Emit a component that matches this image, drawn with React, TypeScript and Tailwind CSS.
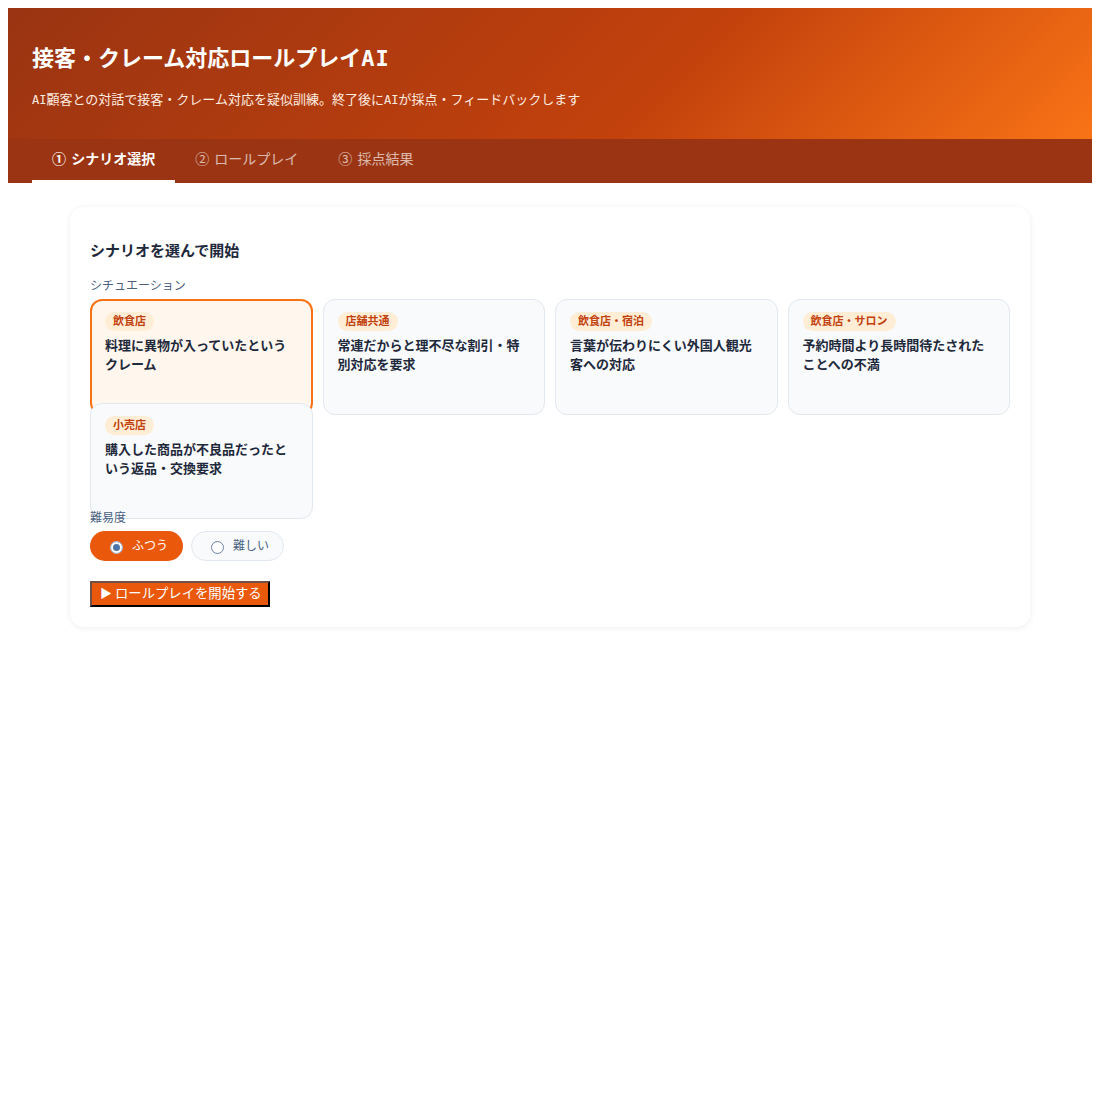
const FONT = "font-['Noto_Sans_CJK_JP','Noto_Sans',sans-serif]";

const SCENARIOS = [
  { tag: "飲食店", text: "料理に異物が入っていたというクレーム", selected: true },
  { tag: "店舗共通", text: "常連だからと理不尽な割引・特別対応を要求" },
  { tag: "飲食店・宿泊", text: "言葉が伝わりにくい外国人観光客への対応" },
  { tag: "飲食店・サロン", text: "予約時間より長時間待たされたことへの不満" },
  { tag: "小売店", text: "購入した商品が不良品だったという返品・交換要求" },
];

const radioClass =
  "mt-[4px] h-[13px] w-[13px] appearance-none rounded-full border border-[#6d83a8] bg-white checked:border-[#b9c9e0] checked:bg-[#4f74a8] checked:shadow-[inset_0_0_0_2px_#fff]";

function ScenarioCard({ tag, text, selected }: { tag: string; text: string; selected?: boolean }) {
  return (
    <div
      className={`h-[116px] rounded-xl border ${
        selected ? "border-2 border-[#f97316] bg-[#fff7ed] px-[13px] pt-[11px]" : "border-[#e2e8f0] bg-[#f8fafc] px-[14px] pt-3"
      }`}
    >
      <span className="block w-fit rounded-full bg-[#ffedd5] px-2 pb-[2px] text-[11px] leading-[17px] font-bold text-[#c2410c]">
        {tag}
      </span>
      <p className="mt-[4px] text-[13px] leading-[19px] font-semibold text-[#1e293b]">{text}</p>
    </div>
  );
}

export default function App() {
  return (
    <div className={`${FONT} m-2 min-h-[1078px] text-[#1e293b]`}>
      <header className="h-[131px] bg-[linear-gradient(135deg,#9a3412_0%,#c2410c_60%,#f97316_100%)] px-6 pt-6">
        <h1 className="text-[22px] leading-[48px] font-bold text-white">
          接客・クレーム対応ロールプレイ<span className="font-['DejaVu_Sans_Mono'] tracking-[1px]">AI</span>
        </h1>
        <p className="mt-[6px] text-[13px] leading-5 text-[#ffede0]">
          <span className="font-['DejaVu_Sans_Mono'] text-[12px]">AI</span>顧客との対話で接客・クレーム対応を疑似訓練。終了後に
          <span className="font-['DejaVu_Sans_Mono'] text-[12px]">AI</span>が採点・フィードバックします
        </p>
      </header>

      <nav className="flex h-11 bg-[#9a3412] px-6 text-sm [word-spacing:2px]">
        <div className="flex items-center border-b-[3px] border-white px-5 pb-[3px] font-bold text-white">① シナリオ選択</div>
        <div className="flex items-center px-5 pb-[6px] text-white/65">② ロールプレイ</div>
        <div className="flex items-center px-5 pb-[6px] text-white/65">③ 採点結果</div>
      </nav>

      <main className="mx-auto mt-6 w-[960px] rounded-[14px] bg-white p-5 shadow-[0_1px_6px_rgba(0,0,0,0.07)]">
        <h2 className="mt-[10px] text-[15px] leading-[26px] font-bold">シナリオを選んで開始</h2>

        <div className="mt-[13px] text-xs leading-[18px] text-[#4a6080]">シチュエーション</div>
        <div className="mt-[5px] grid auto-rows-[94px] grid-cols-4 gap-[10px]">
          {SCENARIOS.map((s) => (
            <ScenarioCard key={s.tag} {...s} />
          ))}
        </div>

        <div className="mt-[11px] text-xs leading-[18px] text-[#4a6080]">難易度</div>
        <div className="mt-[5px] flex gap-2">
          <label className="flex h-[30px] w-[93px] items-center gap-[9px] rounded-full bg-[#ea580c] pb-[2px] pl-5 text-xs text-white">
            <input type="radio" name="level" defaultChecked className={radioClass} />
            ふつう
          </label>
          <label className="flex h-[30px] w-[93px] items-center gap-[9px] rounded-full border border-[#e2e8f0] bg-[#f8fafc] pb-[2px] pl-[19px] text-xs text-[#4a6080]">
            <input type="radio" name="level" className={radioClass} />
            難しい
          </label>
        </div>

        <button className="mt-5 block h-[26px] w-[180px] border-2 border-t-[#6e5048] border-r-black border-b-black border-l-[#6e5048] bg-[#ea580c] pb-[2px] pl-2 text-left text-[13.33px] leading-5 text-white">
          <span className="mr-[3px] text-[12px]">▶</span>ロールプレイを開始する
        </button>
      </main>
    </div>
  );
}
